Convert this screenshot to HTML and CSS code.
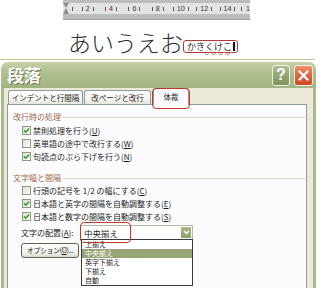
FILE: index.html
```html
<!DOCTYPE html>
<html lang="ja">
<head>
    <meta charset="UTF-8">
    <meta name="viewport" content="width=device-width, initial-scale=1.0">
    <title>段落</title>
    <link rel="stylesheet" href="styles.css">
</head>
<body>
    <div class="doc">
        <div class="ruler">
            <div class="ruler-band">
                <span class="indent">
                    <svg width="6" height="11" viewBox="0 0 6 11"><polygon points="0,0 6,0 3,5 6,11 0,11 3,5" fill="#8d8d8d"/></svg>
                </span>
                <span class="r-lead"><i></i></span>
                <span class="r-num">2</span>
                <span class="r-num">4</span>
                <span class="r-num">6</span>
                <span class="r-num">8</span>
                <span class="r-num">10</span>
                <span class="r-num">12</span>
                <span class="r-num">14</span>
                <span class="r-end"><i></i>1</span>
            </div>
        </div>
        <div class="sample">
            <span class="big">あいうえお</span>
            <span class="small-box">かき<span class="wavy">くけこ</span><b class="caret"></b></span>
        </div>
    </div>

    <div class="dialog">
        <div class="titlebar">
            <span class="title">段落</span>
            <div class="tb-buttons">
                <span class="tb-btn help">?</span>
                <span class="tb-btn close">
                    <svg width="11" height="11" viewBox="0 0 11 11"><path d="M1.5 1.5 L9.5 9.5 M9.5 1.5 L1.5 9.5" stroke="#fff" stroke-width="2.4" stroke-linecap="round"/></svg>
                </span>
            </div>
        </div>
        <div class="body">
            <div class="tabs">
                <span class="tab t1">インデントと行間隔</span>
                <span class="tab t2">改ページと改行</span>
                <span class="tab active">体裁</span>
            </div>
            <div class="panel">
                <div class="group-title">改行時の処理</div>
                <div class="rows">
                    <div class="row"><span class="cb checked"></span><span>禁則処理を行う(<u>U</u>)</span></div>
                    <div class="row"><span class="cb"></span><span>英単語の途中で改行する(<u>W</u>)</span></div>
                    <div class="row"><span class="cb checked"></span><span>句読点のぶら下げを行う(<u>N</u>)</span></div>
                </div>

                <div class="group-title second">文字幅と間隔</div>
                <div class="rows tight">
                    <div class="row"><span class="cb"></span><span>行頭の記号を 1/2 の幅にする(<u>C</u>)</span></div>
                    <div class="row"><span class="cb checked"></span><span>日本語と英字の間隔を自動調整する(<u>E</u>)</span></div>
                    <div class="row"><span class="cb checked"></span><span>日本語と数字の間隔を自動調整する(<u>S</u>)</span></div>
                </div>

                <div class="align-row">
                    <span class="align-label">文字の配置(<u>A</u>):</span>
                    <div class="select">
                        <span>中央揃え</span>
                        <span class="arrow">
                            <svg width="7" height="5" viewBox="0 0 7 5"><path d="M1 1 L3.5 3.5 L6 1" stroke="#fff" stroke-width="1.4" fill="none"/></svg>
                        </span>
                        <ul class="dropdown">
                            <li>上揃え</li>
                            <li class="sel">中央揃え</li>
                            <li>英字下揃え</li>
                            <li>下揃え</li>
                            <li>自動</li>
                        </ul>
                    </div>
                </div>

                <button class="opt">オプション(<u>O</u>)...</button>
            </div>
        </div>
    </div>
</body>
</html>
```

FILE: styles.css
```css
* {
    box-sizing: border-box;
}

body {
    margin: 0;
    width: 320px;
    height: 288px;
    overflow: hidden;
    background: #fff;
    font-family: "Noto Sans CJK JP", "Noto Sans", sans-serif;
    color: #1c1c1c;
}

u {
    text-decoration: underline;
}

/* document preview */

.doc {
    height: 60px;
    margin-right: 5px;
    border-bottom: 1px solid #bccc99;
}

.ruler {
    margin-left: 63px;
    width: 187px;
    height: 20px;
    padding-top: 3px;
    background: #bdbdbd;
    border-bottom: 1px solid #a0a0a0;
}

.ruler-band {
    display: flex;
    align-items: center;
    height: 11px;
    background: #e3e3e3;
    font-family: "Liberation Sans", sans-serif;
    font-size: 7px;
    line-height: 7px;
    color: #333;
}

.indent {
    display: flex;
    width: 6px;
}

.r-lead {
    display: flex;
    width: 7.2px;
    padding-left: 3px;
}

.r-lead i,
.r-end i {
    width: 1px;
    height: 4px;
    background: #555;
}

.r-num {
    display: flex;
    justify-content: center;
    align-items: center;
    gap: 3px;
    width: 23.6px;
}

.r-num::before,
.r-num::after {
    content: '';
    width: 1px;
    height: 4px;
    background: #555;
}

.r-end {
    display: flex;
    align-items: center;
    gap: 4px;
    padding-left: 2px;
}

.sample {
    display: flex;
    align-items: flex-end;
    margin: 11px 0 0 68px;
}

.big {
    font-size: 23px;
    line-height: 23px;
    font-weight: 300;
    color: #2b2b2b;
}

.small-box {
    display: flex;
    align-items: center;
    height: 13px;
    margin-bottom: 1px;
    padding: 0 2px 0 3px;
    border: 1.5px solid #b43a3a;
    border-radius: 3px;
    font-size: 9px;
    line-height: 10px;
    color: #333;
}

.wavy {
    text-decoration: underline wavy #d07070;
    text-decoration-thickness: 1px;
}

.caret {
    width: 1.5px;
    height: 9px;
    margin-left: 1px;
    background: #111;
}

/* dialog */

.dialog {
    width: 315px;
    margin: 2px 0 0 1px;
}

.titlebar {
    display: flex;
    align-items: center;
    justify-content: space-between;
    height: 26px;
    padding: 0 3px 0 6px;
    border-radius: 7px 7px 0 0;
    background: linear-gradient(#c4d1a6, #aebf8d 45%, #a2b481);
}

.title {
    font-size: 17px;
    line-height: 20px;
    font-weight: bold;
    color: #fff;
    text-shadow: 1px 1px 0 #6f7f52;
}

.tb-buttons {
    display: flex;
    gap: 4px;
}

.tb-btn {
    display: flex;
    align-items: center;
    justify-content: center;
    width: 18px;
    height: 21px;
    border: 1px solid #eef2e3;
    border-radius: 3px;
}

.help {
    background: linear-gradient(#b0bf93, #90a371 55%, #7f935f);
    font: bold 16px "Liberation Sans", sans-serif;
    color: #fff;
}

.close {
    width: 19px;
    background: linear-gradient(#f0916a, #e0623a 50%, #cd4824);
}

.body {
    height: 200px;
    padding: 0 6px 0 3px;
    background: #ece9d8;
    border-left: 3px solid #a9b98b;
    border-right: 3px solid #a9b98b;
}

.tabs {
    display: flex;
    align-items: flex-end;
    gap: 1px;
    height: 16px;
    margin-left: 1px;
    position: relative;
    z-index: 1;
}

.tab {
    height: 14px;
    border: 1px solid #919b9c;
    border-bottom: none;
    border-radius: 3px 3px 0 0;
    background: linear-gradient(#fff, #f4f3ee 70%, #e6e5dc);
    font-size: 7.5px;
    line-height: 13px;
    text-align: center;
    white-space: nowrap;
    color: #1e1e1e;
}

.t1 {
    width: 75px;
}

.t2 {
    width: 67px;
}

.tab.active {
    position: relative;
    width: 36px;
    height: 17px;
    margin: 0 0 -1px 1px;
    background: #fcfcfe;
    line-height: 15px;
}

.tab.active::after {
    content: '';
    position: absolute;
    left: -2px;
    right: -2px;
    top: -1px;
    bottom: -4px;
    border: 1.5px solid #c0392b;
    border-radius: 4px;
}

.panel {
    height: 190px;
    border: 1px solid #919b9c;
    background: #fcfcfe;
}

.group-title {
    display: flex;
    align-items: center;
    gap: 2px;
    height: 10px;
    margin: 7px 1px 0 5px;
    font-size: 8px;
    line-height: 10px;
    color: #9c6a4c;
}

.group-title::after {
    content: '';
    flex: 1;
    height: 1px;
    background: #d6d5c8;
}

.group-title.second {
    margin-top: 10px;
}

.rows {
    margin: 2px 0 0 14px;
}

.rows.tight {
    margin-top: 1px;
}

.row {
    display: flex;
    align-items: center;
    gap: 2px;
    height: 13px;
    font-size: 8px;
    line-height: 13px;
    white-space: nowrap;
}

.cb {
    flex: none;
    width: 9px;
    height: 9px;
    border: 1px solid #8c9a7d;
    background: linear-gradient(135deg, #dddcd4, #fff);
}

.cb.checked {
    background: url("data:image/svg+xml,%3Csvg xmlns='http://www.w3.org/2000/svg' width='7' height='7' viewBox='0 0 7 7'%3E%3Cpath d='M1 3.4 L2.8 5.2 L6 1.6' stroke='%2331a12b' stroke-width='1.6' fill='none'/%3E%3C/svg%3E") center no-repeat, linear-gradient(135deg, #dddcd4, #fff);
}

.align-row {
    display: flex;
    align-items: center;
    height: 15px;
    margin: 2px 0 0 13px;
    font-size: 8px;
    white-space: nowrap;
}

.align-label {
    width: 59px;
}

.select {
    position: relative;
    display: flex;
    align-items: center;
    width: 113px;
    height: 15px;
    padding-left: 3px;
    border: 1px solid #b5b9a8;
    background: #fff;
    font-size: 8.5px;
}

.select::after {
    content: '';
    position: absolute;
    left: -1px;
    top: -4px;
    width: 49px;
    height: 19px;
    border: 1.5px solid #c0392b;
    border-radius: 4px;
    z-index: 3;
}

.arrow {
    display: flex;
    align-items: center;
    justify-content: center;
    width: 10px;
    height: 11px;
    margin: 0 1px 0 auto;
    border-radius: 1px;
    background: linear-gradient(#a9b987, #8c9f6a);
}

.dropdown {
    position: absolute;
    left: 0;
    top: 13px;
    width: 112px;
    margin: 0;
    padding: 0;
    list-style: none;
    border: 1px solid #3a3a3a;
    background: #fff;
    z-index: 2;
}

.dropdown li {
    height: 9px;
    padding-left: 3px;
    font-size: 7px;
    line-height: 9px;
}

.dropdown li.sel {
    background: #95a574;
    color: #fff;
}

.opt {
    display: block;
    width: 58px;
    height: 15px;
    margin: 3px 0 0 13px;
    padding: 0;
    border: 1px solid #5b6655;
    border-radius: 3px;
    background: linear-gradient(#fff, #efeee7 75%, #d8d7cd);
    font-family: inherit;
    font-size: 7px;
    letter-spacing: -0.4px;
    line-height: 13px;
    text-align: center;
    white-space: nowrap;
    color: #1c1c1c;
}
```
